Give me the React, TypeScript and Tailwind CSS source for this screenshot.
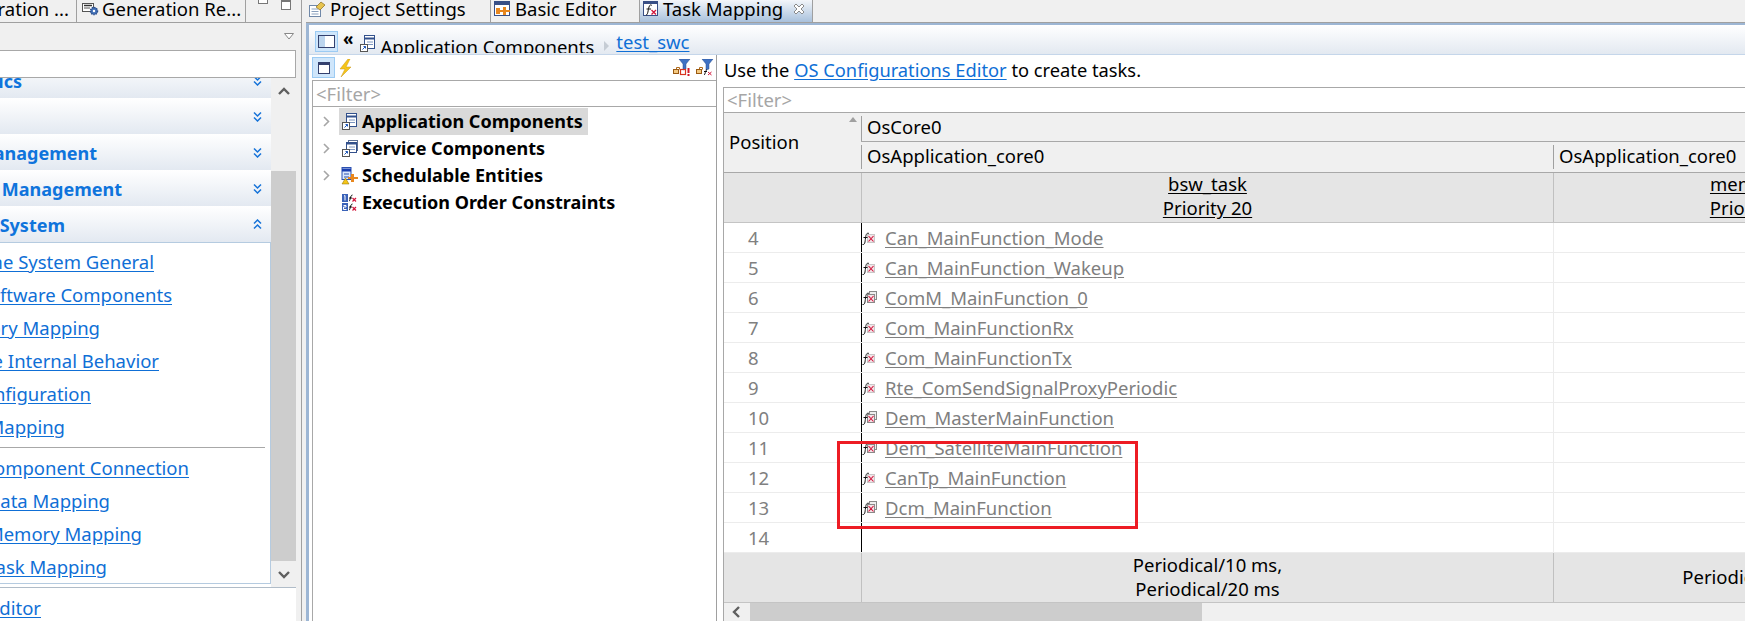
import React from 'react';

const font = "font-['Noto_Sans',sans-serif]";

function DoubleChevron({ up = false }: { up?: boolean }) {
  return (
    <svg width="9" height="11" viewBox="0 0 9 11" fill="none" stroke="#1673d8" strokeWidth="1.5">
      {up ? (
        <>
          <path d="M1 4.5 4.5 1 8 4.5" />
          <path d="M1 9.5 4.5 6 8 9.5" />
        </>
      ) : (
        <>
          <path d="M1 1.5 4.5 5 8 1.5" />
          <path d="M1 6.5 4.5 10 8 6.5" />
        </>
      )}
    </svg>
  );
}

function ScrollArrow({ dir }: { dir: 'up' | 'down' | 'left' }) {
  const d = dir === 'up' ? 'M1 8 6 3l5 5' : dir === 'down' ? 'M1 4l5 5 5-5' : 'M8 1 3 6l5 5';
  return (
    <svg width="12" height="12" viewBox="0 0 12 12" fill="none" stroke="#5f5f5f" strokeWidth="2.4">
      <path d={d} />
    </svg>
  );
}

function TreeArrow() {
  return (
    <svg width="7" height="11" viewBox="0 0 7 11" fill="none" stroke="#a6a6a6" strokeWidth="1.6">
      <path d="M1 1l4.5 4.5L1 10" />
    </svg>
  );
}

function CloseIcon() {
  return (
    <svg width="12" height="12" viewBox="0 0 12 12" className="ml-[6px] shrink-0">
      <path d="M3 1 6 4l3-3 2 2-3 3 3 3-2 2-3-3-3 3-2-2 3-3-3-3z" fill="#fff" stroke="#8a8a8a" />
    </svg>
  );
}

function FxIcon({ double = false }: { double?: boolean }) {
  return (
    <svg width="16" height="16" viewBox="0 0 16 16" className="shrink-0">
      {double && <rect x="7.5" y="1.5" width="7" height="8" fill="#eee" stroke="#8a8a8a" />}
      <rect x="5.5" y="4.5" width="7" height="8" fill="#f3e4e8" stroke={double ? '#8a8a8a' : '#c8c8c8'} />
      <path d="M6.5 6 11.5 11.5M11.5 6 6.500 11.500" stroke="#d2143a" strokeWidth="1.100" />
      <path d="M0.500 14.500C3 15 3 12 3.500 8S5 2.500 7 3.500M1.500 7.500H5.500" fill="none" stroke="#111" strokeWidth="1" />
    </svg>
  );
}

function DocIcon({ kind }: { kind: 'app' | 'service' }) {
  return (
    <svg width="16" height="17" viewBox="0 0 16 17" className="shrink-0">
      {kind === 'service' && <rect x="6.500" y="0.500" width="9" height="10" fill="#fff" stroke="#5a6f96" />}
      <rect x="4.500" y={kind === 'app' ? 0.5 : 2.5} width="10" height={kind === 'app' ? 13 : 10} fill="#fff" stroke="#33518c" />
      <path d="M4.500 3.500H14.500" stroke="#33518c" strokeWidth="2" />
      <path d="M7 7H13M7 9.500H13" stroke="#7d96c0" />
      <rect x="0.500" y="9.500" width="7" height="7" fill="#fff" stroke="#555" />
      <path d="M2.500 14.500 5.500 11.500M3.500 11.500H5.500V13.500" fill="none" stroke="#1e57b8" />
    </svg>
  );
}

function ScheduleIcon() {
  return (
    <svg width="18" height="18" viewBox="0 0 18 18" className="shrink-0">
      <rect x="1" y="0.500" width="9" height="12" fill="#dbe8fb" stroke="#2a50b0" />
      <path d="M1 3H10" stroke="#1a3fb0" strokeWidth="3" />
      <path d="M3 7H8M3 10H8" stroke="#2a50b0" />
      <path d="M7 10h3V7h3v3h4v2h-4v3h-3v-3H7z" fill="#e8871e" />
      <path d="M4.500 11 8 17H1z" fill="#f5c518" stroke="#8a6d00" strokeWidth="0.500" />
    </svg>
  );
}

function OrderIcon() {
  return (
    <svg width="15" height="17" viewBox="0 0 15 17" className="shrink-0">
      <rect x="0" y="0" width="6" height="8" fill="#3a62b8" />
      <rect x="0" y="9" width="6" height="8" fill="#3a62b8" />
      <path d="M2 2 3 1.500V6.500M1.500 11.500H4V13H1.500V15.500H4.500" fill="none" stroke="#fff" />
      <path d="M7 7C8.500 7 8 1 10.500 1M7 4H10M7 16C8.500 16 8 10 10.500 10M7 13H10" fill="none" stroke="#111" />
      <path d="M10.500 4 14 7.500M14 4 10.500 7.500M10.500 13 14 16.500M14 13 10.500 16.500" stroke="#d2143a" strokeWidth="1.2" />
    </svg>
  );
}

function SettingsIcon() {
  return (
    <svg width="17" height="16" viewBox="0 0 17 16" className="shrink-0">
      <rect x="0.500" y="4.500" width="11" height="11" fill="#fff" stroke="#7088a8" />
      <path d="M2.500 8H9.500M2.500 10.500H9.500M2.500 13H9.500" stroke="#8aa0bd" />
      <path d="M7 6 12 1l4 3-5 5z" fill="#e8c44e" stroke="#8a6d20" strokeWidth="0.700" />
    </svg>
  );
}

function BasicEditorIcon() {
  return (
    <svg width="17" height="16" viewBox="0 0 17 16" className="shrink-0">
      <rect x="0.500" y="0.500" width="15" height="14" fill="#fff" stroke="#384f86" />
      <path d="M1 2.500H15" stroke="#384f86" strokeWidth="3" />
      <path d="M2 7h4v2h3V6h3v3h4v2h-4v3H9v-3H6v2H2z" fill="#e8871e" />
    </svg>
  );
}

function TaskMappingIcon() {
  return (
    <svg width="16" height="16" viewBox="0 0 16 16" className="shrink-0">
      <rect x="0.500" y="0.500" width="14" height="14" fill="#fff" stroke="#384f86" />
      <path d="M1 2H14" stroke="#384f86" strokeWidth="2" />
      <path d="M3 14C5 14 5 9 6 6S8 4 9 4.500M3.500 8H8" fill="none" stroke="#111" />
      <path d="M8.500 9 13 13.500M13 9 8.500 13.500" stroke="#d2143a" strokeWidth="1.300" />
    </svg>
  );
}

function GenerationIcon() {
  return (
    <svg width="17" height="13" viewBox="0 0 17 13" className="shrink-0">
      <rect x="0.500" y="0.500" width="11" height="8" fill="#fff" stroke="#555" />
      <path d="M2 2.500H10" stroke="#333" strokeWidth="1.500" />
      <path d="M2 5H8" stroke="#555" />
      <circle cx="12" cy="8" r="3.500" fill="#4472b8" stroke="#2c4f8c" strokeWidth="1.500" strokeDasharray="1.500 0.800" />
      <circle cx="12" cy="8" r="1.200" fill="#fff" />
    </svg>
  );
}

function FilterIcon({ kind }: { kind: 'error' | 'fx' }) {
  return (
    <svg width="18" height="17" viewBox="0 0 18 17" className="shrink-0">
      <path d="M6 0h11l-4 5v5l-3 1V5z" fill="#3f72c4" stroke="#2b4f8f" strokeWidth="0.500" />
      <path d="M0.500 10.500h3v-2h3v2" fill="none" stroke="#b06a1a" />
      <rect x="0.500" y="10.500" width="5" height="4" fill="#f3c981" stroke="#9a5a12" />
      {kind === 'error' ? (
        <>
          <rect x="7.500" y="10.500" width="5" height="5" fill="none" stroke="#d8341e" strokeWidth="1.200" />
          <path d="M15.500 9v5" stroke="#d11a2a" strokeWidth="2" />
          <rect x="14.500" y="15" width="2" height="2" fill="#d11a2a" />
        </>
      ) : (
        <>
          <path d="M8 16C9.500 16 9 11 11 10.500M8 12.500H11" fill="none" stroke="#111" />
          <path d="M12 13l3.500 3M15.500 13 12 16" stroke="#d2143a" />
        </>
      )}
    </svg>
  );
}

// the panel is cut off on the left, so labels are anchored by their right end
function SectionRow({ label, up, end }: { label: string; up?: boolean; end?: string }) {
  return (
    <div className="h-[36px] flex items-center justify-between pr-[9px] bg-gradient-to-b from-white to-[#e3e9f1]">
      <div className={`flex justify-end pt-[2px] ${end}`}>
        <span className="whitespace-nowrap text-[18px] font-bold text-[#0f74dc] shrink-0">{label}</span>
      </div>
      <DoubleChevron up={up} />
    </div>
  );
}

const linksTop = [
  { label: 'Runtime System General', end: 'w-[154px]' },
  { label: 'Software Components', end: 'w-[172px]' },
  { label: 'Memory Mapping', end: 'w-[100px]' },
  { label: 'Software Internal Behavior', end: 'w-[159px]' },
  { label: 'Configuration', end: 'w-[91px]' },
  { label: 'Mapping', end: 'w-[65px]' },
];

const linksBottom = [
  { label: 'Component Connection', end: 'w-[189px]' },
  { label: 'Data Mapping', end: 'w-[110px]' },
  { label: 'Memory Mapping', end: 'w-[142px]' },
  { label: 'Task Mapping', end: 'w-[107px]' },
];

function LeftLink({ label, end }: { label: string; end: string }) {
  return (
    <div className={`h-[33px] flex items-center justify-end ${end}`}>
      <span className="whitespace-nowrap shrink-0 text-[18.5px] text-[#0f6fd6] underline underline-offset-2">{label}</span>
    </div>
  );
}

function LeftPanel() {
  return (
    <aside className="w-[302px] shrink-0 h-full flex flex-col border-r border-[#a0a0a0] overflow-hidden">
      {/* tab strip */}
      <div className="h-[23px] shrink-0 flex border-b border-[#a0a0a0] overflow-hidden relative">
        <div className="w-[77px] shrink-0 flex justify-end items-center border-r border-[#a0a0a0] pr-[7px] pb-[4px]">
          <span className="whitespace-nowrap shrink-0 text-[18.5px] text-black">ration ...</span>
        </div>
        <div className="w-[169px] shrink-0 flex items-center gap-[3px] pl-[5px] border-r border-[#a0a0a0] pb-[4px]">
          <GenerationIcon />
          <span className="whitespace-nowrap text-[18.5px] text-black">Generation Re...</span>
        </div>
        <div className="absolute left-[258px] top-0 w-[10px] h-[4px] border border-[#777] border-t-0 bg-white" />
        <div className="absolute left-[281px] top-0 w-[10px] h-[10px] border border-[#777] border-t-2 bg-white" />
      </div>
      <div className="h-[27px] shrink-0 flex justify-end items-center pr-[6px]">
        <svg width="11" height="7" viewBox="0 0 11 7" fill="#fff" stroke="#888">
          <path d="M.5.500h9L5 6z" />
        </svg>
      </div>
      <div className="h-[28px] shrink-0 mr-[5px] bg-white border border-[#a8a8a8] border-l-0" />
      {/* form sections with its scrollbar */}
      <div className="h-[509px] shrink-0 flex mr-[5px]">
        <div className="w-[271px] shrink-0 flex flex-col bg-white overflow-hidden">
          <div className="h-[20px] shrink-0 overflow-hidden flex flex-col justify-end">
            <div className="shrink-0">
              <SectionRow label="Diagnostics" end="w-[22px]" />
            </div>
          </div>
          <SectionRow label="" />
          <SectionRow label="Mode Management" end="w-[97px]" />
          <SectionRow label="Network Management" end="w-[122px]" />
          <SectionRow label="Runtime System" up end="w-[65px]" />
          <div className="h-[342px] shrink-0 border border-l-0 border-[#b5cbe0] pt-[2px]">
            {linksTop.map((l) => (
              <LeftLink key={l.label} {...l} />
            ))}
            <div className="h-[1px] bg-[#a8a8a8] mr-[5px] mt-[4px] mb-[3px]" />
            {linksBottom.map((l) => (
              <LeftLink key={l.label + l.end} {...l} />
            ))}
          </div>
        </div>
        <div className="flex-1 flex flex-col bg-[#f0f0f0]">
          <div className="h-[93px] shrink-0 flex justify-center pt-[8px]">
            <ScrollArrow dir="up" />
          </div>
          <div className="h-[390px] shrink-0 bg-[#cdcdcd]" />
          <div className="h-[26px] shrink-0 flex justify-center items-center">
            <ScrollArrow dir="down" />
          </div>
        </div>
      </div>
      <div className="flex-1 mr-[5px] bg-white border-t border-[#b0bcc8] flex items-center justify-start pt-[6px]">
        <div className="w-[41px] flex justify-end">
          <span className="whitespace-nowrap shrink-0 text-[18.5px] text-[#0f6fd6] underline underline-offset-2">Editor</span>
        </div>
      </div>
    </aside>
  );
}

function EditorTab({ icon, label, width, active, close }: { icon: React.ReactNode; label: string; width: string; active?: boolean; close?: boolean }) {
  return (
    <div className={`${width} shrink-0 flex items-center gap-[4px] pl-[3px] pb-[4px] border-r border-[#a0a0a0] ${active ? 'bg-gradient-to-b from-[#f3f6fa] to-[#a9c1dc]' : ''}`}>
      {icon}
      <span className="whitespace-nowrap text-[18.5px] text-black">{label}</span>
      {close && <CloseIcon />}
    </div>
  );
}

const tree = [
  { label: 'Application Components', icon: <DocIcon kind="app" />, arrow: true, selected: true },
  { label: 'Service Components', icon: <DocIcon kind="service" />, arrow: true },
  { label: 'Schedulable Entities', icon: <ScheduleIcon />, arrow: true },
  { label: 'Execution Order Constraints', icon: <OrderIcon />, arrow: false },
];

function MasterPane() {
  return (
    <div className="w-[408px] shrink-0 flex flex-col border-r border-[#a0a0a0] pl-[3px]">
      <div className="h-[25px] shrink-0 flex items-center">
        <div className="w-[23px] h-[21px] flex items-center justify-center bg-[#cfe6fb] border border-[#9ccbf3]">
          <div className="w-[12px] h-[12px] border border-[#33406e] border-t-[3px] bg-white" />
        </div>
        <svg width="15" height="18" viewBox="0 0 15 18" className="ml-[3px]">
          <path d="M10 0 2 10h5l-4 8 10-10H8l4-8z" fill="#f5c518" stroke="#c9971a" strokeWidth="0.500" />
        </svg>
        <div className="ml-auto flex gap-[5px] pr-[2px]">
          <FilterIcon kind="error" />
          <FilterIcon kind="fx" />
        </div>
      </div>
      <div className="flex-1 flex flex-col border-t border-l border-[#a8a8a8]">
        <div className="h-[26px] shrink-0 border-b border-[#a8a8a8] flex items-center pl-[3px] text-[18.5px] text-[#a6a6a6]">&lt;Filter&gt;</div>
        <div className="pt-[1px]">
          {tree.map((t) => (
            <div key={t.label} className="h-[27px] flex items-center">
              <div className="w-[26px] shrink-0 flex justify-center">{t.arrow && <TreeArrow />}</div>
              <div className={`flex items-center gap-[4px] h-[27px] pl-[2px] pr-[5px] ${t.selected ? 'bg-[#d9d9d9]' : ''}`}>
                <div className="w-[17px] flex justify-center">{t.icon}</div>
                <span className="whitespace-nowrap text-[18px] font-bold text-black">{t.label}</span>
              </div>
            </div>
          ))}
        </div>
      </div>
    </div>
  );
}

const rows = [
  { pos: 4, name: 'Can_MainFunction_Mode' },
  { pos: 5, name: 'Can_MainFunction_Wakeup' },
  { pos: 6, name: 'ComM_MainFunction_0', double: true },
  { pos: 7, name: 'Com_MainFunctionRx' },
  { pos: 8, name: 'Com_MainFunctionTx' },
  { pos: 9, name: 'Rte_ComSendSignalProxyPeriodic' },
  { pos: 10, name: 'Dem_MasterMainFunction', double: true },
  { pos: 11, name: 'Dem_SatelliteMainFunction', double: true },
  { pos: 12, name: 'CanTp_MainFunction' },
  { pos: 13, name: 'Dcm_MainFunction', double: true },
  { pos: 14, name: '' },
];

function TaskTable() {
  return (
    <div className="flex-1 min-w-0 flex flex-col pl-[6px] overflow-hidden relative">
      <div className="h-[32px] shrink-0 flex items-center pl-[1px] pb-[3px] text-[18.300px] text-black whitespace-nowrap">
        Use the&nbsp;<span className="text-[#0f6fd6] underline underline-offset-2">OS Configurations Editor</span>&nbsp;to create tasks.
      </div>
      <div className="flex-1 min-h-0 flex flex-col border-l border-[#a8a8a8]">
        <div className="h-[25px] shrink-0 border-t border-[#a8a8a8] flex items-center pl-[3px] text-[18.5px] text-[#a6a6a6]">&lt;Filter&gt;</div>
        {/* column header */}
        <div className="h-[61px] shrink-0 flex bg-[#f0f0f0] border-t border-b border-[#a8a8a8]">
          <div className="w-[137px] shrink-0 flex items-center pl-[5px] pb-[2px] text-[18.5px] text-black relative">
            Position
            <svg width="8" height="5" viewBox="0 0 8 5" className="absolute right-[4px] top-[4px]">
              <path d="M4 0 8 5H0z" fill="#a0a0a0" />
            </svg>
          </div>
          <div className="flex-1 min-h-0 flex flex-col">
            <div className="h-[29px] shrink-0 flex items-center pl-[6px] border-b border-[#a8a8a8] text-[18.5px] text-black relative">
              OsCore0
              <div className="absolute left-0 top-[3px] bottom-0 w-[1px] bg-[#a0a0a0]" />
            </div>
            <div className="h-[30px] shrink-0 flex">
              <div className="w-[692px] shrink-0 flex items-center pl-[5px] pb-[2px] leading-[22px] text-[18.5px] text-black border-l border-[#a0a0a0] my-[3px]">OsApplication_core0</div>
              <div className="flex-1 flex items-center pl-[5px] pb-[2px] leading-[22px] text-[18.5px] text-black border-l border-[#a0a0a0] my-[3px] whitespace-nowrap">OsApplication_core0</div>
            </div>
          </div>
        </div>
        {/* task names */}
        <div className="h-[50px] shrink-0 flex bg-[#e5e5e5] border-b border-[#c4c4c4] text-[18.5px] text-black leading-[24px]">
          <div className="w-[137px] shrink-0" />
          <div className="w-[692px] shrink-0 flex flex-col items-center justify-center pb-[3px] border-l border-[#c0c0c0]">
            <span className="underline underline-offset-2">bsw_task</span>
            <span className="underline underline-offset-2">Priority 20</span>
          </div>
          <div className="w-[402px] shrink-0 flex flex-col items-center justify-center pb-[3px] border-l border-[#c0c0c0] whitespace-nowrap">
            <span className="underline underline-offset-2">mem_task</span>
            <span className="underline underline-offset-2">Priority 10</span>
          </div>
        </div>
        {rows.map((r) => (
          <div key={r.pos} className="h-[30px] shrink-0 flex bg-white border-b border-[#ececec] last:border-b-0">
            <div className="w-[137px] shrink-0 pl-[24px] flex items-center text-[18.5px] text-[#808080]">{r.pos}</div>
            <div className="w-[692px] shrink-0 border-l border-black flex items-center">
              {r.name && (
                <>
                  <FxIcon double={r.double} />
                  <span className="ml-[7px] text-[18.5px] text-[#7f7f7f] underline underline-offset-2">{r.name}</span>
                </>
              )}
            </div>
            <div className="w-[402px] shrink-0 border-l border-[#ececec]" />
          </div>
        ))}
        {/* period footer */}
        <div className="h-[50px] shrink-0 flex bg-[#e5e5e5] border-b border-[#c4c4c4] text-[18.5px] text-black leading-[24px]">
          <div className="w-[137px] shrink-0" />
          <div className="w-[692px] shrink-0 flex flex-col items-center justify-center pb-[2px] border-l border-[#c0c0c0]">
            <span>Periodical/10 ms,</span>
            <span>Periodical/20 ms</span>
          </div>
          <div className="w-[402px] shrink-0 flex items-center justify-center pb-[2px] border-l border-[#c0c0c0] whitespace-nowrap">Periodical/10 ms</div>
        </div>
        <div className="flex-1 flex bg-[#f0f0f0]">
          <div className="w-[26px] shrink-0 flex items-center justify-center">
            <ScrollArrow dir="left" />
          </div>
          <div className="w-[452px] shrink-0 bg-[#cdcdcd]" />
        </div>
      </div>
    </div>
  );
}

function Editor() {
  return (
    <main className="flex-1 min-w-0 h-full flex flex-col">
      <div className="h-[23px] shrink-0 flex border-b border-[#a0a0a0] overflow-hidden">
        <EditorTab icon={<SettingsIcon />} label="Project Settings" width="w-[185px]" />
        <EditorTab icon={<BasicEditorIcon />} label="Basic Editor" width="w-[149px]" />
        <EditorTab icon={<TaskMappingIcon />} label="Task Mapping" width="w-[173px]" active close />
      </div>
      <div className="flex-1 min-h-0 flex flex-col border-t-[2px] border-l-[3px] border-[#9db6d4] bg-white">
        <div className="h-[30px] shrink-0 flex items-start overflow-hidden border-b border-[#c5d6ea] bg-gradient-to-b from-white to-[#e3e9f1] pl-[6px]">
          <div className="mt-[6px] w-[23px] h-[21px] flex items-center justify-center bg-[#cfe6fb] border border-[#9ccbf3]">
            <div className="w-[17px] h-[13px] border border-[#33406e] bg-white flex">
              <div className="w-[6px] bg-[#bcd5ee]" />
            </div>
          </div>
          <span className="ml-[5px] mt-[1px] text-[17px] font-bold text-black">«</span>
          <div className="ml-[7px] mt-[10px]">
            <DocIcon kind="app" />
          </div>
          {/* the crumb is cut by the bottom of the header in the reference */}
          <div className="ml-[4px] mt-[8px] h-[20px] overflow-hidden">
            <span className="block whitespace-nowrap text-[18.5px] text-black">Application Components</span>
          </div>
          <svg width="6" height="10" viewBox="0 0 6 10" className="ml-[10px] mt-[16px]">
            <path d="M0 0 5 5 0 10z" fill="#c5ccd4" />
          </svg>
          <span className="ml-[6px] mt-[3px] whitespace-nowrap text-[18.5px] text-[#0f6fd6] underline underline-offset-2">test_swc</span>
        </div>
        <div className="flex-1 min-h-0 flex">
          <MasterPane />
          <TaskTable />
        </div>
      </div>
    </main>
  );
}

export default function App() {
  return (
    <div className={`${font} relative w-[1745px] h-[621px] overflow-hidden flex bg-[#f0f0f0]`}>
      <LeftPanel />
      <div className="w-[4px] shrink-0" />
      <Editor />
      {/* red annotation box drawn over the screenshot */}
      <div className="absolute left-[837px] top-[441px] w-[301px] h-[88px] border-[3px] border-[#ed1c24]" />
    </div>
  );
}
